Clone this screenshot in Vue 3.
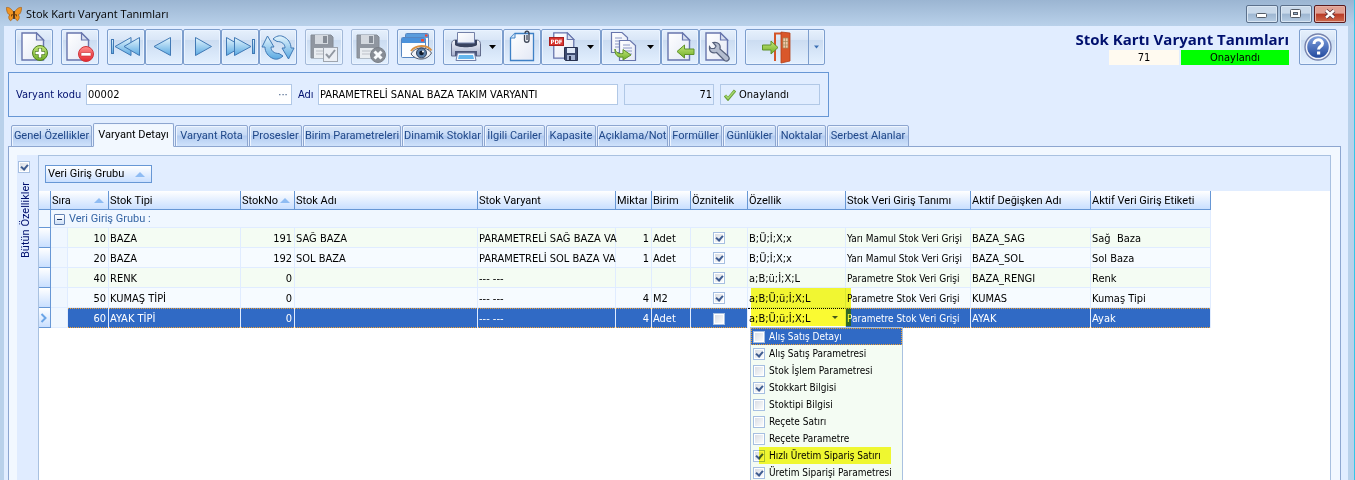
<script setup>
import { ref } from 'vue'

const tabs = [
  { name: 'Genel Özellikler', w: 81 },
  { name: 'Varyant Detayı', w: 81 },
  { name: 'Varyant Rota', w: 73 },
  { name: 'Prosesler', w: 53 },
  { name: 'Birim Parametreleri', w: 98 },
  { name: 'Dinamik Stoklar', w: 81 },
  { name: 'İlgili Cariler', w: 61 },
  { name: 'Kapasite', w: 50 },
  { name: 'Açıklama/Not', w: 71 },
  { name: 'Formüller', w: 53 },
  { name: 'Günlükler', w: 53 },
  { name: 'Noktalar', w: 49 },
  { name: 'Serbest Alanlar', w: 82 },
]
const activeTab = ref(1)

const columns = [12, 17, 41, 132, 54, 183, 138, 36, 39, 57, 98, 125, 120, 120]
const headers = [
  { text: 'Sıra', span: 2, sort: true },
  { text: 'Stok Tipi' },
  { text: 'StokNo', sort: true },
  { text: 'Stok Adı' },
  { text: 'Stok Varyant' },
  { text: 'Miktar' },
  { text: 'Birim' },
  { text: 'Öznitelik' },
  { text: 'Özellik' },
  { text: 'Stok Veri Giriş Tanımı' },
  { text: 'Aktif Değişken Adı' },
  { text: 'Aktif Veri Giriş Etiketi' },
]
const rows = ref([
  { no: 10, type: 'BAZA', stock: 191, name: 'SAĞ BAZA', variant: 'PARAMETRELİ SAĞ BAZA VA', qty: 1, unit: 'Adet', attr: true, prop: 'B;Ü;İ;X;x', def: 'Yarı Mamul Stok Veri Grişi', variable: 'BAZA_SAG', label: 'Sağ  Baza' },
  { no: 20, type: 'BAZA', stock: 192, name: 'SOL BAZA', variant: 'PARAMETRELİ SOL BAZA VA', qty: 1, unit: 'Adet', attr: true, prop: 'B;Ü;İ;X;x', def: 'Yarı Mamul Stok Veri Grişi', variable: 'BAZA_SOL', label: 'Sol Baza' },
  { no: 40, type: 'RENK', stock: 0, name: '', variant: '--- ---', qty: '', unit: '', attr: true, prop: 'a;B;ü;İ;X;L', def: 'Parametre Stok Veri Grişi', variable: 'BAZA_RENGI', label: 'Renk' },
  { no: 50, type: 'KUMAŞ TİPİ', stock: 0, name: '', variant: '--- ---', qty: 4, unit: 'M2', attr: true, prop: 'a;B;Ü;ü;İ;X;L', def: 'Parametre Stok Veri Grişi', variable: 'KUMAS', label: 'Kumaş Tipi' },
  { no: 60, type: 'AYAK TİPİ', stock: 0, name: '', variant: '--- ---', qty: 4, unit: 'Adet', attr: false, prop: 'a;B;Ü;ü;İ;X;L', def: 'Parametre Stok Veri Grişi', variable: 'AYAK', label: 'Ayak', current: true },
])
const options = ref([
  { text: 'Alış Satış Detayı', on: false },
  { text: 'Alış Satış Parametresi', on: true },
  { text: 'Stok İşlem Parametresi', on: false },
  { text: 'Stokkart Bilgisi', on: true },
  { text: 'Stoktipi Bilgisi', on: false },
  { text: 'Reçete Satırı', on: false },
  { text: 'Reçete Parametre', on: false },
  { text: 'Hızlı Üretim Sipariş Satırı', on: true, marked: true },
  { text: 'Üretim Siparişi Parametresi', on: true },
])
const code = ref('00002')
const title = ref('PARAMETRELİ SANAL BAZA TAKIM VARYANTI')
const allProps = ref(true)
</script>

<template>
  <div class="window">
    <svg class="defs" width="0" height="0" aria-hidden="true">
      <defs>
        <linearGradient id="gPage" x1="0" y1="0" x2="1" y2="1">
          <stop offset="0" stop-color="#ffffff" /><stop offset="1" stop-color="#e3e8f5" />
        </linearGradient>
        <linearGradient id="gArrow" x1="0" y1="0" x2="0" y2="1">
          <stop offset="0" stop-color="#e4f5fd" /><stop offset="1" stop-color="#5aa9e2" />
        </linearGradient>
        <linearGradient id="gGreen" x1="0" y1="0" x2="0" y2="1">
          <stop offset="0" stop-color="#c4e77a" /><stop offset="1" stop-color="#6fae27" />
        </linearGradient>
        <linearGradient id="gRed" x1="0" y1="0" x2="0" y2="1">
          <stop offset="0" stop-color="#ff8d8d" /><stop offset="1" stop-color="#e5262d" />
        </linearGradient>
        <linearGradient id="gSteel" x1="0" y1="0" x2="0" y2="1">
          <stop offset="0" stop-color="#f4f6fc" /><stop offset="1" stop-color="#a4aecb" />
        </linearGradient>
        <linearGradient id="gBlue" x1="0" y1="0" x2="0" y2="1">
          <stop offset="0" stop-color="#7f9fdc" /><stop offset="1" stop-color="#234a9f" />
        </linearGradient>
        <symbol id="page" viewBox="0 0 24 29">
          <path d="M1 1H15.500L22.500 8V28H1Z" fill="url(#gPage)" stroke="#6876ad" stroke-width="1.400" />
          <path d="M15.500 1V8H22.500Z" fill="#d7dff0" stroke="#6876ad" stroke-width="1.200" />
        </symbol>
        <symbol id="floppy" viewBox="0 0 24 25">
          <path d="M1 1H21L23 3V24H1Z" fill="#858a92" stroke="#777c84" />
          <rect x="5" y="1" width="13" height="9" fill="#d4d7db" />
          <rect x="13" y="2" width="4" height="7" fill="#777c84" />
          <rect x="4" y="14" width="16" height="10" fill="#eceef0" />
          <path d="M6 17H18M6 20H18" stroke="#b7bac0" />
        </symbol>
      </defs>
    </svg>

    <header class="titlebar">
      <svg class="logo" viewBox="0 0 16 16">
        <path d="M8 7C6 3 3 1 .5 1.500C.5 5 1.500 8.500 4 8.800C2 10 2.500 13 4.500 14.800C6.500 13.800 7.500 11 8 9C8.500 11 9.500 13.800 11.500 14.800C13.500 13 14 10 12 8.800C14.500 8.500 15.500 5 15.500 1.500C13 1 10 3 8 7Z" fill="#f19422" stroke="#a85c0c" stroke-width=".7" />
        <path d="M5 8.500L7.500 8L5 11ZM11 8.500L8.500 8L11 11Z" fill="#7c4308" />
        <path d="M8 5V13" stroke="#3d220b" stroke-width="1.500" />
      </svg>
      <span class="caption">Stok Kartı Varyant Tanımları</span>
      <div class="winbtns">
        <button class="wb" aria-label="Simge durumuna küçült"><svg viewBox="0 0 30 16"><rect x="9.500" y="7.500" width="10" height="4" rx="1" fill="#fff" stroke="#555d68" /></svg></button>
        <button class="wb" aria-label="Ekranı kapla"><svg viewBox="0 0 30 16"><rect x="9.500" y="3.500" width="10" height="8" rx="1" fill="#fff" stroke="#555d68" /><rect x="12.500" y="6.500" width="4" height="2" fill="#9ab3cf" stroke="#555d68" /></svg></button>
        <button class="wb close" aria-label="Kapat"><svg viewBox="0 0 30 16"><path d="M11 4.500L19 11.500M19 4.500L11 11.500" stroke="#59323a" stroke-width="4.200" /><path d="M11 4.500L19 11.500M19 4.500L11 11.500" stroke="#fff" stroke-width="2.400" /></svg></button>
      </div>
    </header>

    <main class="client">
      <div class="toolbar">
        <div class="group">
          <button class="tb" aria-label="Yeni"><svg viewBox="1 1 36 34">
            <use href="#page" x="6" y="3" width="24" height="29" />
            <circle cx="25" cy="24" r="7.500" fill="url(#gGreen)" stroke="#4e7d20" />
            <path d="M25 19V29M20 24H30" stroke="#4e7d20" stroke-width="4.200" /><path d="M25 19.500V28.500M20.500 24H29.500" stroke="#fff" stroke-width="2.600" />
          </svg></button>
        </div>
        <div class="group">
          <button class="tb" aria-label="Sil"><svg viewBox="1 1 36 34">
            <use href="#page" x="5" y="3" width="24" height="29" />
            <circle cx="25" cy="25" r="7.500" fill="url(#gRed)" stroke="#d0333a" />
            <rect x="20" y="23.500" width="10" height="3.500" rx=".5" fill="#fff" stroke="#c42127" stroke-width=".6" />
          </svg></button>
        </div>
        <div class="group">
          <button class="tb" aria-label="İlk kayıt"><svg viewBox="1 1 36 34" class="nav">
            <rect x="4.500" y="10.500" width="2" height="14" /><path d="M8 17.500L24 8.500V26.500Z" /><path d="M17 17.500L32.500 8.500V26.500Z" />
          </svg></button>
          <button class="tb" aria-label="Önceki kayıt"><svg viewBox="1 1 36 34" class="nav"><path d="M9 17.500L25.500 8.500V26.500Z" /></svg></button>
          <button class="tb" aria-label="Sonraki kayıt"><svg viewBox="1 1 36 34" class="nav"><path d="M28.500 17.500L12.500 8.500V26.500Z" /></svg></button>
          <button class="tb" aria-label="Son kayıt"><svg viewBox="1 1 36 34" class="nav">
            <path d="M21 17.500L5.500 8.500V26.500Z" /><path d="M30 17.500L13.500 8.500V26.500Z" /><rect x="31.500" y="10.500" width="2" height="14" />
          </svg></button>
          <button class="tb" aria-label="Yenile"><svg viewBox="1 1 36 34" class="nav">
            <path d="M3 18L8.500 7L15 18H12C12 22 15 24.500 20 24.500L24 27C21 30 17 31 14 29.500C9 27.500 6 23 6 18Z" />
            <path d="M35 19L29.500 30L23 19H26C26 15 23 12.500 18 12.500L14 10C17 7 21 6 24 7.500C29 9.500 32 14 32 19Z" />
          </svg></button>
        </div>
        <div class="group">
          <button class="tb off" aria-label="Kaydet"><svg viewBox="1 1 36 34">
            <use href="#floppy" x="5" y="5" width="24" height="25" />
            <rect x="18.500" y="18.500" width="14" height="14" fill="#eef0f4" stroke="#9499a1" /><path d="M21 25L24 28.500L30 21" fill="none" stroke="#858a92" stroke-width="2" />
          </svg></button>
        </div>
        <div class="group">
          <button class="tb off" aria-label="İptal"><svg viewBox="1 1 36 34">
            <use href="#floppy" x="5" y="5" width="24" height="25" />
            <circle cx="27" cy="26" r="7.500" fill="#7a7e85" stroke="#6b6f76" /><path d="M23.500 22.500L30.500 29.500M30.500 22.500L23.500 29.500" stroke="#fff" stroke-width="3" />
          </svg></button>
        </div>
        <div class="group">
          <button class="tb" aria-label="Görünüm"><svg viewBox="1 1 36 34">
            <rect x="8.500" y="4.500" width="23" height="19" rx="1" fill="#f5faff" stroke="#5686c2" /><rect x="9" y="5" width="22" height="4" fill="#5b9ddd" /><rect x="28" y="5.500" width="2.500" height="2" fill="#ef4734" />
            <rect x="4.500" y="8.500" width="24" height="20" rx="1" fill="#fdfeff" stroke="#5686c2" /><rect x="5" y="9" width="23" height="5" fill="#4b92db" /><rect x="24" y="10" width="3" height="2.500" fill="#ef4734" />
            <path d="M14 25C18 17 30 17 34.500 24C30 32 19 32 14 25Z" fill="#f2f3f7" stroke="#4e596b" /><path d="M14 22C19 15.500 30 15.500 34.500 21.500" fill="none" stroke="#d99144" stroke-width="2" />
            <circle cx="24.500" cy="24" r="5" fill="#5b7fa9" stroke="#30425e" /><circle cx="24.500" cy="24" r="2.300" fill="#101a2a" /><circle cx="26" cy="22.500" r="1" fill="#fff" />
          </svg></button>
        </div>
        <div class="group">
          <button class="tb wide" aria-label="Yazdır"><svg viewBox="1 1 58 34">
            <path d="M8.500 16C8.500 12 10 11 13 11H33C36 11 37.500 12 37.500 16V27H8.500Z" fill="url(#gSteel)" stroke="#626c8c" />
            <path d="M12 11H34V16C31 19 15 19 12 16Z" fill="#39425e" />
            <path d="M14.500 3.500H31.500V14H14.500Z" fill="url(#gPage)" stroke="#7380a8" />
            <rect x="12" y="22" width="22" height="5" fill="#4c5679" />
            <path d="M14.500 24H31.500L33 31.500H13Z" fill="#f5f9ff" stroke="#7380a8" /><path d="M16 26H30L31 30H15Z" fill="#63b5ed" />
            <path d="M46 16H53L49.500 20Z" fill="#000" />
          </svg></button>
          <button class="tb" aria-label="Ekler"><svg viewBox="1 1 36 34">
            <path d="M12 4.500H30.500V31.500H7.500V9Z" fill="url(#gPage)" stroke="#3f81c6" stroke-width="1.300" /><path d="M12 4.500V9H7.500" fill="#d9eafa" stroke="#3f81c6" />
            <path d="M21.500 6V11C21.500 14 26 14 26 11V4.500C26 1.500 22 1.500 22 4.500M24 6V11" fill="none" stroke="#3e4657" stroke-width="1.300" />
          </svg></button>
          <button class="tb wide" aria-label="PDF kaydet"><svg viewBox="1 1 58 34">
            <use href="#page" x="11" y="3" width="24" height="27" />
            <rect x="8.500" y="8.500" width="14" height="8" fill="#d9352f" stroke="#a82020" /><text x="15.500" y="15" text-anchor="middle" class="pdf">PDF</text>
            <path d="M23.500 18.500H36.500V31.500H24.500L23.500 30.500Z" fill="#3c4a6f" stroke="#27314f" /><rect x="26" y="19" width="8" height="5" fill="#dfe8f7" /><rect x="26" y="26" width="8" height="5" fill="#a4b2d1" /><rect x="28" y="27" width="2" height="4" fill="#27314f" />
            <path d="M46 16H53L49.500 20Z" fill="#000" />
          </svg></button>
          <button class="tb wide" aria-label="Kopyala"><svg viewBox="1 1 58 34">
            <path d="M10.500 3.500H21L26.500 8.500V23.500H10.500Z" fill="url(#gPage)" stroke="#6876ad" stroke-width="1.200" /><path d="M14 9H21M14 12H22M14 15H22M14 18H20" stroke="#8c98c5" />
            <path d="M18.500 11.500H29L34.500 16.500V31.500H18.500Z" fill="url(#gPage)" stroke="#6876ad" stroke-width="1.200" /><path d="M22 16H29M22 19H31M22 22H31M22 25H31" stroke="#8c98c5" />
            <path d="M14 20C15 24 18 25 22 24.500V20.500L30 26L22 31V28C17 29 13.500 26 14 20Z" fill="url(#gGreen)" stroke="#5f922a" />
            <path d="M46 16H53L49.500 20Z" fill="#000" />
          </svg></button>
          <button class="tb" aria-label="İçeri al"><svg viewBox="1 1 36 34">
            <use href="#page" x="6" y="3" width="24" height="29" />
            <path d="M16 22.500L23.500 16V20H33V25.500H23.500V29Z" fill="url(#gGreen)" stroke="#5f922a" />
          </svg></button>
          <button class="tb" aria-label="Ayarlar"><svg viewBox="1 1 36 34">
            <use href="#page" x="6" y="3" width="24" height="29" />
            <path d="M14 13.500L17 17L15.500 19.500L12 19.500L10.500 17.500C10 23 13 24.500 17.500 23.500L25.500 31.500C28.500 33.500 31.500 30 29.500 27.500L21 20C22 15.500 19 12.500 14 13.500Z" fill="#b4bdcf" stroke="#56617c" stroke-width="1.200" />
          </svg></button>
        </div>
        <div class="group">
          <button class="tb exit" aria-label="Çıkış"><svg viewBox="1 1 78 34">
            <path d="M30 32V4.500H38" fill="none" stroke="#d35428" stroke-width="2" />
            <path d="M36 3L45 4V32L36 34Z" fill="#d9572a" stroke="#b23f18" stroke-width=".8" /><path d="M38 9H43V19H38ZM40.500 9V19M38 12.500H43M38 16H43" fill="#f3c7a9" stroke="#a08a5a" stroke-width=".7" />
            <path d="M33 18.500L26 12V16H17.500V21H26V25Z" fill="url(#gGreen)" stroke="#5f922a" />
            <path d="M63.500 1V35" stroke="#7d9ecd" /><path d="M69 16.500H74L71.500 19.500Z" fill="#3c70b4" />
          </svg></button>
        </div>

        <div class="status">
          <h1>Stok Kartı Varyant Tanımları</h1>
          <div class="badges"><span class="idbox">71</span><span class="okbox">Onaylandı</span></div>
        </div>
        <button class="tb" aria-label="Yardım"><svg viewBox="1 1 36 34">
          <circle cx="19" cy="18" r="13" fill="#f2f5fc" stroke="#7683ad" stroke-width="1.400" /><circle cx="19" cy="18" r="10.800" fill="url(#gBlue)" />
          <path d="M15 15C15 9.500 23.500 9.500 23.500 14.500C23.500 17.500 19.500 17.500 19.500 20.500" fill="none" stroke="#fff" stroke-width="3" /><rect x="18" y="22.500" width="3.200" height="3" fill="#fff" />
        </svg></button>
      </div>

      <form class="record" @submit.prevent>
        <label for="code">Varyant kodu</label>
        <div class="field codebox"><input id="code" v-model="code" /><button type="button" class="dots" aria-label="Seç">···</button></div>
        <label for="title" class="adi">Adı</label>
        <div class="field namebox"><input id="title" v-model="title" /></div>
        <output class="field num">71</output>
        <output class="field ok">
          <svg viewBox="0 0 12 12"><path d="M1 6.500L4 10L11 1.500" fill="none" stroke="#6ba03b" stroke-width="3" /><path d="M1.500 6.500L4 9.400L10.500 2" fill="none" stroke="#a5d86c" stroke-width="1.400" /></svg>
          Onaylandı
        </output>
      </form>

      <nav class="tabs" role="tablist">
        <button v-for="(t, i) in tabs" :key="t.name" role="tab" class="tab" :class="{ active: i === activeTab }" :aria-selected="i === activeTab" :style="{ width: t.w + 'px' }" @click="activeTab = i">{{ t.name }}</button>
      </nav>

      <section class="sheet">
        <aside class="side">
          <input id="all" v-model="allProps" type="checkbox" class="chk" />
          <label for="all">Bütün Özellikler</label>
        </aside>
        <div class="grid">
          <div class="groupbar"><button class="chip">Veri Giriş Grubu<i class="up"></i></button></div>
          <div class="body">
            <table>
              <colgroup><col v-for="(w, i) in columns" :key="i" :style="{ width: w + 'px' }" /></colgroup>
              <thead>
                <tr>
                  <th class="ind"></th>
                  <th v-for="h in headers" :key="h.text" :colspan="h.span || 1"><div><span>{{ h.text }}</span><i v-if="h.sort" class="up"></i></div></th>
                </tr>
              </thead>
              <tbody>
                <tr class="grouprow">
                  <td class="ind"></td>
                  <td colspan="13"><button class="minus" aria-label="Daralt"></button>Veri Giriş Grubu :</td>
                </tr>
                <tr v-for="r in rows" :key="r.no" class="row" :class="{ current: r.current }">
                  <td class="ind"><svg v-if="r.current" viewBox="0 0 8 10"><path d="M1.500 1L5.500 5L1.500 9" fill="none" stroke="#6ba5e7" stroke-width="2" /></svg></td>
                  <td class="pad"></td>
                  <td class="r">{{ r.no }}</td>
                  <td>{{ r.type }}</td>
                  <td class="r">{{ r.stock }}</td>
                  <td>{{ r.name }}</td>
                  <td>{{ r.variant }}</td>
                  <td class="r">{{ r.qty }}</td>
                  <td>{{ r.unit }}</td>
                  <td class="c"><input v-model="r.attr" type="checkbox" class="chk" :aria-label="'Öznitelik ' + r.no" /></td>
                  <td v-if="r.current" class="editor">
                    <span>{{ r.prop }}</span><i class="down"></i>
                    <span class="mark cellmark"></span>
                    <div class="menu">
                      <label v-for="(o, i) in options" :key="o.text" :class="{ hot: i === 0 }">
                        <input v-model="o.on" type="checkbox" class="chk" />{{ o.text }}<span v-if="o.marked" class="mark itemmark"></span>
                      </label>
                    </div>
                  </td>
                  <td v-else>{{ r.prop }}</td>
                  <td class="def">{{ r.def }}</td>
                  <td>{{ r.variable }}</td>
                  <td>{{ r.label }}</td>
                </tr>
              </tbody>
            </table>
          </div>
        </div>
      </section>
    </main>
  </div>
</template>

<style>
html, body { margin: 0; overflow: hidden; }
</style>

<style scoped>
* { box-sizing: border-box; }
.window {
  height: 100vh; display: flex; flex-direction: column; overflow: hidden;
  padding: 0 6px 0 4px; border-right: 1px solid #35c6e8;
  background: linear-gradient(#9bb5d2, #b9d1ea 26px);
  font: 11px/14px "DejaVu Sans Condensed", "Noto Sans", sans-serif; color: #000;
}
button, input { font: inherit; color: inherit; margin: 0; padding: 0; }
.tab, th, .chip, .side label, .grouprow td { font-family: Roboto, "Noto Sans", sans-serif; }
.def, .menu { font-size: 10px; }
.defs { position: absolute; }
.titlebar { height: 26px; flex: none; display: flex; align-items: center; padding: 2px 2px 0; }
.logo { width: 16px; height: 16px; }
.caption { flex: 1; margin-left: 4px; font: 11px/16px "Open Sans", "Noto Sans", sans-serif; }
.winbtns { display: flex; gap: 2px; }
.wb { width: 32px; height: 18px; border: 1px solid #5c718c; border-radius: 2px; background: linear-gradient(#c9d9ea 45%, #9db6d1 50%, #b7cde4); box-shadow: inset 0 0 0 1px #d9e6f3; }
.wb svg { display: block; width: 30px; height: 16px; }
.wb.close { border-color: #5a1a1e; background: linear-gradient(#e0a093 45%, #b93a26 50%, #cf6a4c); box-shadow: inset 0 0 0 1px #e5b0a5; }
.client { flex: 1; min-height: 0; display: flex; flex-direction: column; background: #e1edff; }
.toolbar { display: flex; gap: 8px; padding: 3px 11px 0; height: 46px; flex: none; align-items: flex-start; }
.group { display: flex; flex: none; }
.tb { width: 38px; height: 36px; flex: none; border: 1px solid #7d9ecd; border-radius: 2px; background: linear-gradient(#e6f0fc, #d9e6f7 28%, #cbdcf1 30%, #e3f0ff); box-shadow: inset 0 0 0 1px #eaf3ff; }
.tb svg { display: block; width: 100%; height: 34px; }
.tb.wide { width: 60px; }
.tb.exit { width: 80px; }
.tb.off { border-color: #a3b9d8; }
.tb.off svg { opacity: .85; }
.nav { fill: url(#gArrow); stroke: #4179b5; stroke-width: 1; }
.pdf { font: bold 6px "DejaVu Sans Condensed", sans-serif; fill: #fff; }
.status { margin-left: auto; display: flex; flex-direction: column; align-items: flex-end; margin-right: 2px; }
h1 { margin: 0; font: bold 15px/20px "Open Sans", "Noto Sans", sans-serif; color: #00106e; white-space: nowrap; }
.badges { display: flex; gap: 2px; margin-top: 1px; line-height: 15px; text-align: center; }
.idbox { width: 70px; background: #fffaf0; }
.okbox { width: 108px; background: #00ff00; }
.record { display: flex; align-items: center; flex: none; width: 821px; height: 45px; margin-left: 4px; padding: 0 7px; border: 1px solid #6797d5; color: #00106e; }
.record label { width: 70px; white-space: nowrap; }
.record .adi { width: 20px; margin-left: 6px; }
.field { height: 21px; flex: none; display: flex; align-items: center; border: 1px solid #b1c8e6; color: #000; }
.field input { flex: 1; min-width: 0; border: 0; outline: 0; background: none; padding-left: 1px; }
.codebox { width: 206px; background: #fff; }
.dots { border: 0; background: none; width: 16px; color: #33507c; }
.namebox { width: 300px; background: #fff; }
.num { width: 90px; margin-left: 6px; justify-content: flex-end; padding-right: 1px; }
.ok { width: 100px; margin-left: 6px; padding-left: 3px; gap: 3px; }
.ok svg { width: 12px; height: 12px; }
.tabs { display: flex; align-items: flex-end; gap: 1px; height: 29px; flex: none; margin: 1px 0 -1px; padding-left: 7px; }
.tab { height: 22px; flex: none; border: 1px solid #8da6d0; border-radius: 2px 2px 0 0; color: #204889; white-space: nowrap; background: linear-gradient(#dbe8fa, #c6daf5 45%, #b2cbf0 50%, #cfe2fb); box-shadow: inset 1px 1px 0 #eef5ff; }
.tab.active { position: relative; z-index: 1; height: 24px; border-bottom-color: #f2f8ff; background: #f2f8ff; color: #000; }
.sheet { flex: 1; min-height: 0; display: flex; margin: 0 7px 0 4px; padding: 8px 9px 0 8px; border: 1px solid #8da6d0; border-bottom: 0; background: #f2f8ff; }
.side { width: 21px; flex: none; padding: 5px 0 0 1px; background: #e0ecff; color: #00106e; }
.side label { display: block; margin: 8px 0 0 1px; writing-mode: vertical-rl; transform: rotate(180deg); }
.grid { flex: 1; min-width: 0; display: flex; flex-direction: column; border: 1px solid #a9c1e0; border-bottom: 0; background: #fff; }
.groupbar { height: 35px; flex: none; padding: 9px 6px; background: #e1edff; }
.chip { display: flex; align-items: center; justify-content: space-between; width: 107px; height: 18px; padding: 0 6px 0 2px; border: 1px solid #6797d5; background: linear-gradient(#fff, #c9dfff); }
.up { flex: none; border: 5px solid transparent; border-top: 0; border-bottom: 5px solid #8fbcf3; }
.body { flex: 1; min-height: 0; }
table { width: 1172px; table-layout: fixed; border-collapse: separate; border-spacing: 0; }
th { height: 19px; padding: 1px 0 0; font-weight: normal; text-align: left; border-right: 1px solid #6797d5; border-bottom: 1px solid #6797d5; background: linear-gradient(#fff, #c9dfff); }
th div { display: flex; align-items: center; padding: 0 4px 0 1px; }
th span { flex: 1; min-width: 0; overflow: hidden; white-space: nowrap; }
td { height: 20px; padding: 2px 2px 0 1px; white-space: pre; border-right: 1px solid #e0ecff; border-bottom: 1px solid #e0ecff; background: #f6fbff; }
td.ind { padding: 0 0 0 1px; border-right: 1px solid #6797d5; border-bottom: 1px solid #6797d5; background: linear-gradient(#fff, #c9dfff); }
.ind svg { display: block; width: 8px; height: 10px; }
.grouprow td { height: 18px; padding-top: 1px; color: #3565a5; background: #f0f7ff; }
.grouprow td + td { padding-left: 3px; }
.minus { position: relative; width: 11px; height: 11px; margin-right: 4px; vertical-align: -2px; border: 1px solid #6383b5; border-radius: 1px; background: linear-gradient(#fff, #cfe0f8); }
.minus::after { content: ""; position: absolute; left: 2px; top: 4px; width: 5px; height: 1px; background: #16315c; }
.row:nth-child(even) td:not(.ind) { background: #f4fcf3; }
.row td.pad, .row:nth-child(even) td.pad { background: #f0f7ff; }
.r { text-align: right; }
.row td.c { text-align: center; padding: 0; line-height: 12px; }
.row.current td:not(.ind):not(.pad):not(.editor) {
  color: #fff; border-bottom: 0; padding-top: 1px;
  background:
    repeating-linear-gradient(90deg, #f0a030 0 1px, #306ac5 1px 2px) top / 100% 1px no-repeat,
    repeating-linear-gradient(90deg, #f0a030 0 1px, #306ac5 1px 2px) bottom / 100% 1px no-repeat,
    #306ac5;
}
.row.current td.editor { position: relative; border-top: 1px dotted #000; border-bottom: 0; padding-top: 0; white-space: nowrap; background: #fff; }
.down { position: absolute; right: 7px; top: 7px; border: 3px solid transparent; border-top-color: #46597a; border-bottom: 0; }
.chk { appearance: none; position: relative; display: inline-block; flex: none; width: 12px; height: 12px; margin: 0; vertical-align: middle; border: 1px solid #a6bfe1; background: linear-gradient(135deg, #d5dae2, #fff); box-shadow: inset 0 0 0 1px #fff; }
.chk:checked::after { content: ""; box-sizing: border-box; position: absolute; left: 3px; top: 1px; width: 5px; height: 7px; border: solid #3e5c90; border-width: 0 2px 2px 0; transform: rotate(40deg); }
.menu { position: absolute; z-index: 2; left: 2px; top: 18px; width: 153px; border: 1px solid #a9c1e0; background: #f4fcf3; color: #000; }
.menu label { position: relative; display: flex; align-items: center; gap: 4px; height: 17px; padding-left: 2px; }
.menu .hot { background: #306ac5; color: #fff; outline: 1px dotted #f0a030; outline-offset: -1px; }
.mark { position: absolute; z-index: 1; background: #fafa32; mix-blend-mode: multiply; pointer-events: none; }
.cellmark { left: 3px; top: -21px; width: 100px; height: 38px; }
.itemmark { left: 8px; top: 0; width: 132px; height: 17px; }
</style>
